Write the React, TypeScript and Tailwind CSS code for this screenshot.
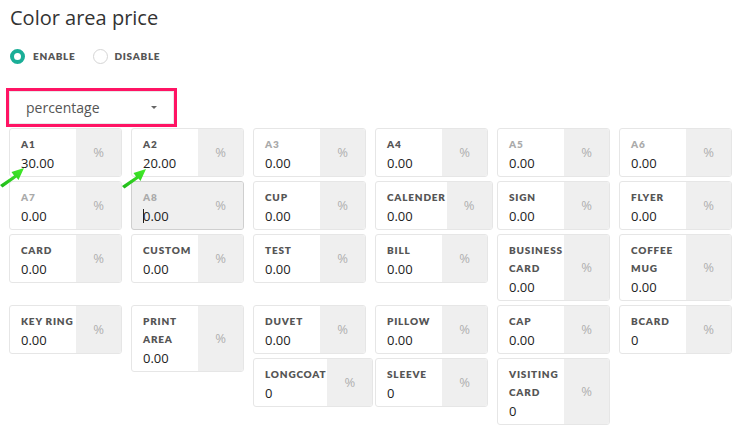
import React from "react";

interface PriceField {
  label: string;
  value: string;
  muted?: boolean;
  focused?: boolean;
}

const fields: PriceField[] = [
  { label: "A1", value: "30.00" },
  { label: "A2", value: "20.00" },
  { label: "A3", value: "0.00", muted: true },
  { label: "A4", value: "0.00" },
  { label: "A5", value: "0.00", muted: true },
  { label: "A6", value: "0.00", muted: true },
  { label: "A7", value: "0.00", muted: true },
  { label: "A8", value: "0.00", muted: true, focused: true },
  { label: "CUP", value: "0.00" },
  { label: "CALENDER", value: "0.00" },
  { label: "SIGN", value: "0.00" },
  { label: "FLYER", value: "0.00" },
  { label: "CARD", value: "0.00" },
  { label: "CUSTOM", value: "0.00" },
  { label: "TEST", value: "0.00" },
  { label: "BILL", value: "0.00" },
  { label: "BUSINESS CARD", value: "0.00" },
  { label: "COFFEE MUG", value: "0.00" },
  { label: "KEY RING", value: "0.00" },
  { label: "PRINT AREA", value: "0.00" },
  { label: "DUVET", value: "0.00" },
  { label: "PILLOW", value: "0.00" },
  { label: "CAP", value: "0.00" },
  { label: "BCARD", value: "0" },
  { label: "LONGCOAT", value: "0" },
  { label: "SLEEVE", value: "0" },
  { label: "VISITING CARD", value: "0" },
];

// labels that wrap onto two lines in the original
const twoLine: Record<string, string[]> = {
  "BUSINESS CARD": ["BUSINESS", "CARD"],
  "COFFEE MUG": ["COFFEE", "MUG"],
  "PRINT AREA": ["PRINT", "AREA"],
  "VISITING CARD": ["VISITING", "CARD"],
};

function FieldBox({ field }: { field: PriceField }) {
  const lines = twoLine[field.label] ?? [field.label];
  return (
    <div className="float-left mb-[4px] w-[122px]">
      <div
        className={
          "flex w-max min-w-[112px] overflow-hidden rounded-[3px] border " +
          (field.focused
            ? "border-[#cfcfcf] bg-[#efefef]"
            : "border-[#e6e6e6] bg-white")
        }
      >
        <div className="min-w-[66px] pt-[6px] pb-[3px] pl-[11px] pr-[1px]">
          {lines.map((l) => (
            <div
              key={l}
              className={
                "whitespace-nowrap text-[10px] font-extrabold uppercase leading-[18px] tracking-[0.8px] " +
                (field.muted ? "text-[#aaaaaa]" : "text-[#555555]")
              }
              style={{ fontFamily: "Lato, 'Open Sans', sans-serif" }}
            >
              {l}
            </div>
          ))}
          <div
            className="flex items-center text-[13px] leading-[20px] text-[#222222]"
            style={{ fontFamily: "'Open Sans', sans-serif" }}
          >
            {field.focused && (
              <span className="mr-[-1px] inline-block h-[14px] w-px bg-[#222]" />
            )}
            {field.value}
          </div>
        </div>
        <div
          className="flex w-[45px] shrink-0 items-center justify-center bg-[#efefef] text-[13px] text-[#b0b0b0]"
          style={{ fontFamily: "'Open Sans', sans-serif" }}
        >
          %
        </div>
      </div>
    </div>
  );
}

function GreenArrow() {
  return (
    <svg width="27" height="23" viewBox="0 0 27 23">
      <defs>
        <linearGradient id="ga" x1="0" y1="1" x2="1" y2="0">
          <stop offset="0" stopColor="#1fb81a" />
          <stop offset="1" stopColor="#44ee2a" />
        </linearGradient>
      </defs>
      <path d="M0 20 L14 10.5 L11.5 7 L24 3 L18.5 15 L16.5 12.5 L2.5 22.5 Z" fill="url(#ga)" />
    </svg>
  );
}

export default function App() {
  return (
    <div
      className="relative h-[435px] w-[741px] overflow-hidden bg-white"
      style={{ fontFamily: "'Open Sans', sans-serif" }}
    >
      {/* Header */}
      <div className="px-[10px] pt-[4px]">
        <h1 className="text-[20px] leading-[28px] text-[#333333]">
          Color area price
        </h1>

        <div className="mt-[17px] flex items-center gap-[10px]">
          <label className="flex items-center gap-[8px]">
            <span className="h-[15px] w-[15px] rounded-full border-[4px] border-[#1aae97] bg-white" />
            <span
              className="text-[10px] font-extrabold tracking-[0.7px] text-[#555555]"
              style={{ fontFamily: "Lato, sans-serif" }}
            >
              ENABLE
            </span>
          </label>
          <label className="ml-[7px] flex items-center gap-[7px]">
            <span className="h-[15px] w-[15px] rounded-full border border-[#d5d5d5] bg-white" />
            <span
              className="text-[10px] font-extrabold tracking-[0.7px] text-[#555555]"
              style={{ fontFamily: "Lato, sans-serif" }}
            >
              DISABLE
            </span>
          </label>
        </div>
      </div>

      {/* Price type select */}
      <div className="ml-[6px] mt-[24px] w-[171px] border-[3px] border-[#ff1464]">
        <div className="flex h-[33px] items-center justify-between border border-[#e8e8e8] bg-white pl-[16px] pr-[16px]">
          <span className="text-[14px] text-[#555555]">percentage</span>
          <span className="h-0 w-0 border-x-[3px] border-t-[3px] border-x-transparent border-t-[#666666]" />
        </div>
      </div>

      {/* Price fields */}
      <div className="mt-[1px] pl-[9px]">
        {fields.map((f) => (
          <FieldBox key={f.label} field={f} />
        ))}
      </div>

      {/* annotation arrows */}
      <div className="absolute left-[0px] top-[165px]">
        <GreenArrow />
      </div>
      <div className="absolute left-[122px] top-[166px]">
        <GreenArrow />
      </div>
    </div>
  );
}
